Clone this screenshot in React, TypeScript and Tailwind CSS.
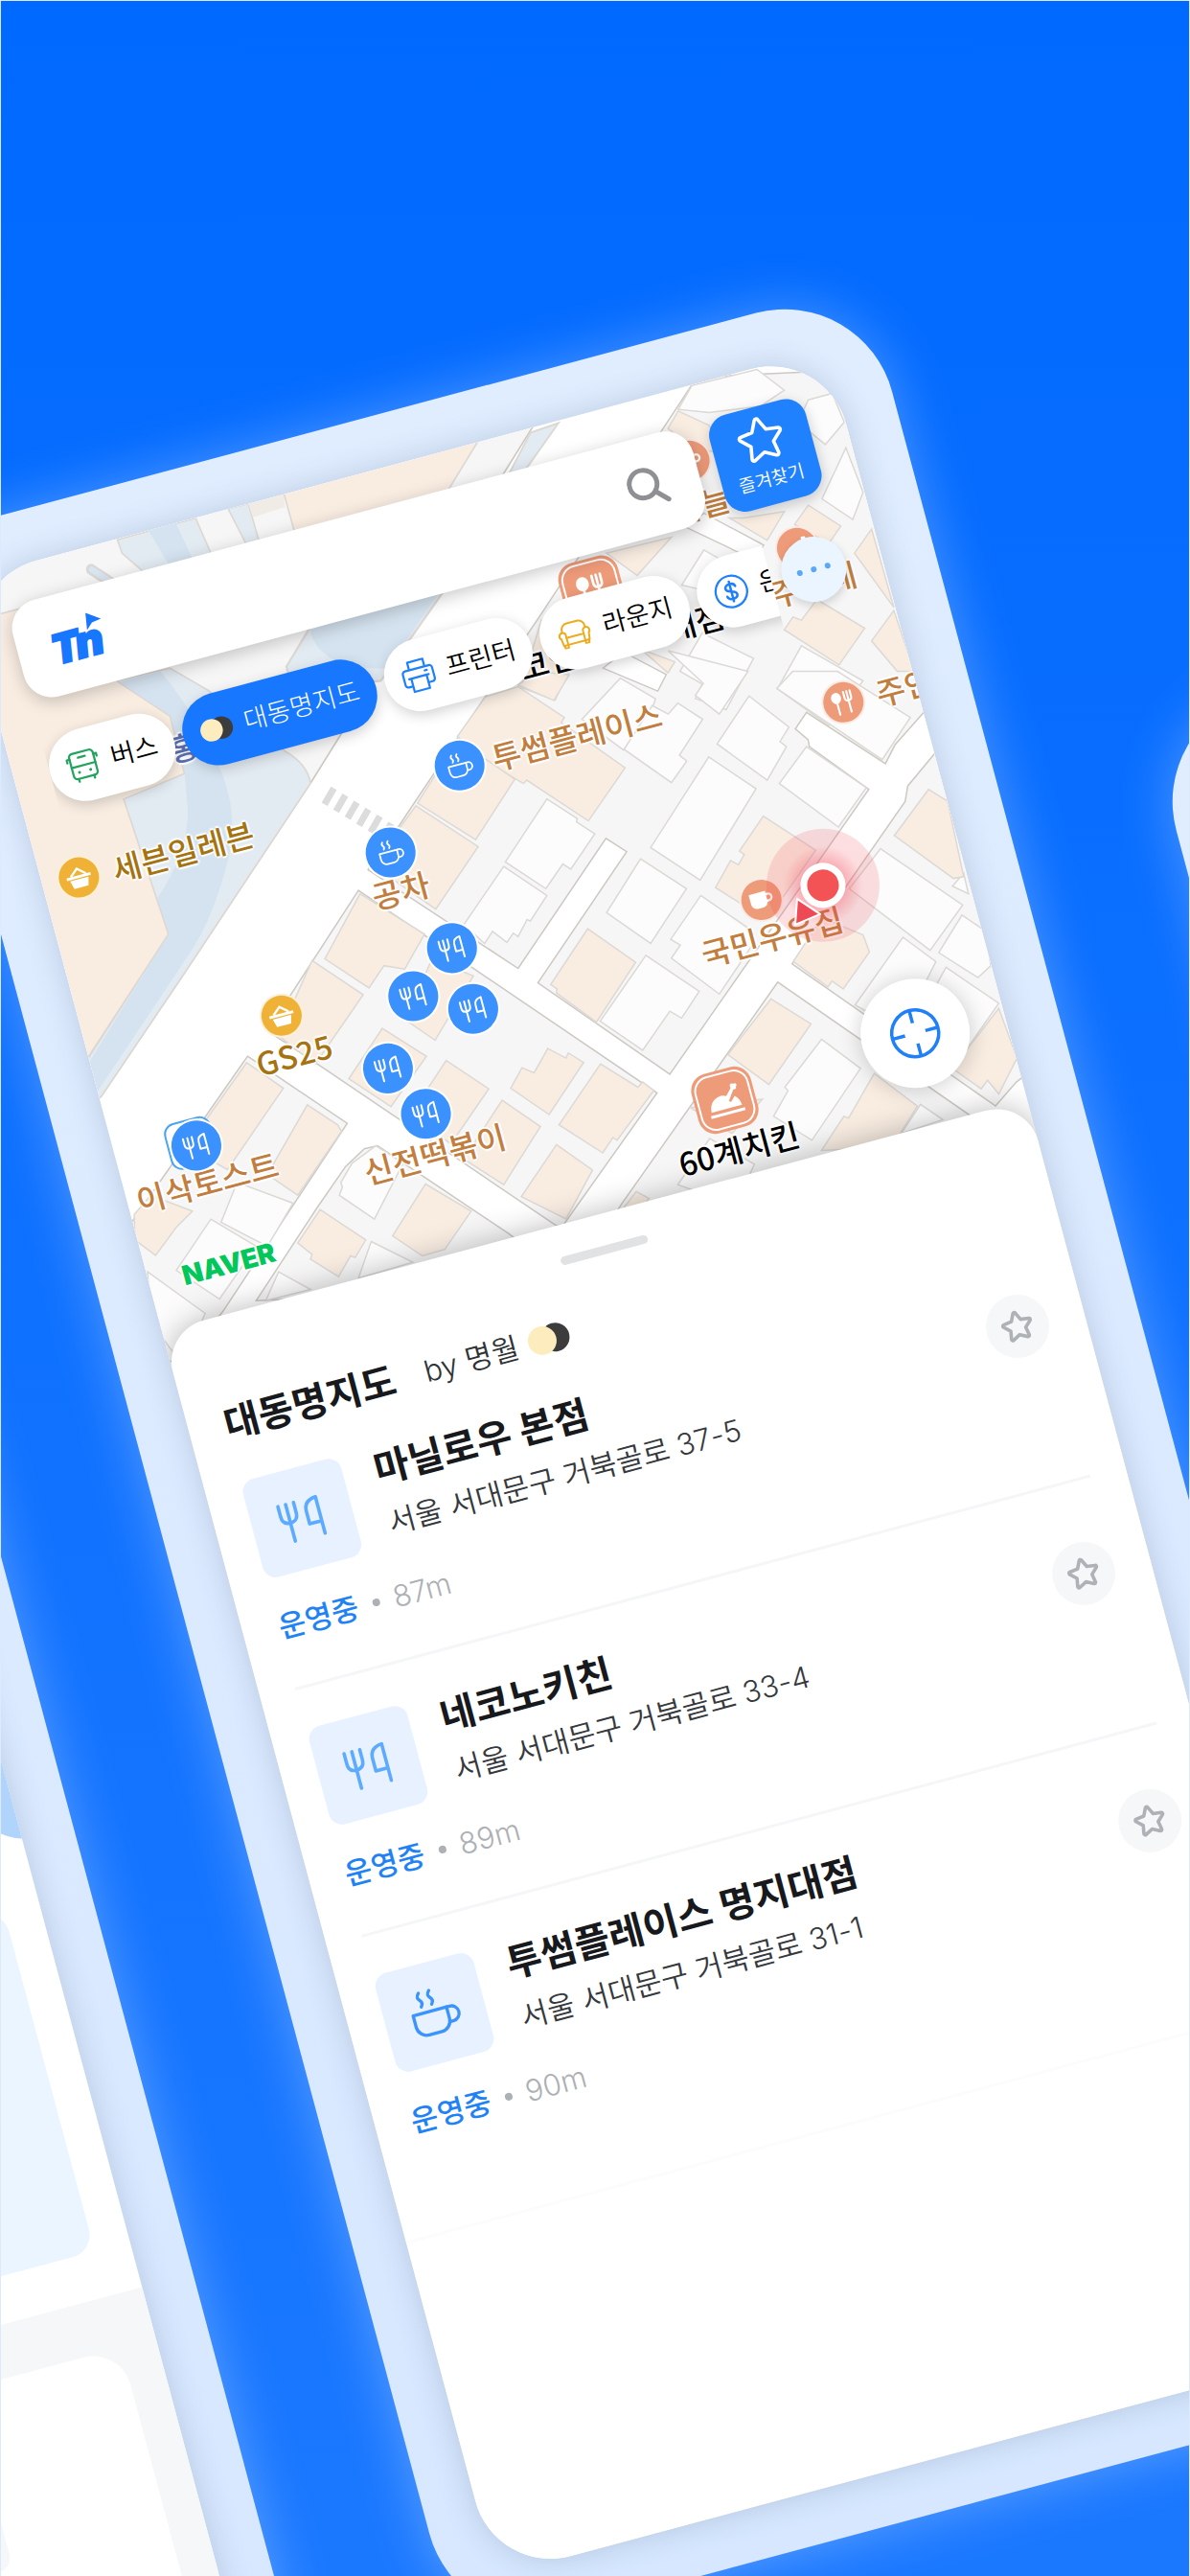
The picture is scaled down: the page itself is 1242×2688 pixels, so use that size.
import type { ReactNode } from "react";

/* ---------- icons ---------- */

type IconProps = { className?: string };

function Utensils({ className }: IconProps) {
  return (
    <svg viewBox="0 0 24 24" className={className} fill="none" stroke="currentColor" strokeWidth="1.6" strokeLinecap="round" strokeLinejoin="round" aria-hidden="true">
      <path d="M2.500 4v5c0 2.400 1.300 3.800 3.700 3.800s3.800-1.400 3.800-3.800V4M6.200 4v17.500" />
      <path d="M20.500 21.500V4c-3.800.3-5.800 2-5.800 5.500v6h5.500" />
    </svg>
  );
}

function Cup({ className }: IconProps) {
  return (
    <svg viewBox="0 0 24 24" className={className} fill="none" stroke="currentColor" strokeWidth="1.500" strokeLinecap="round" strokeLinejoin="round" aria-hidden="true">
      <path d="M2 11h16v5.500a5 5 0 0 1-5 5H7a5 5 0 0 1-5-5z" />
      <path d="M18 11h1.500a3.200 3.200 0 0 1 0 7H18" />
      <path d="M7 1.500c-1.400 1.500-1.300 2.300-.2 3.400 1 1 .9 1.900-.1 3.100M12 1.500c-1.400 1.500-1.300 2.300-.2 3.400 1 1 .9 1.900-.1 3.100" />
    </svg>
  );
}

function Star({ className, width = 2 }: IconProps & { width?: number }) {
  return (
    <svg viewBox="0 0 24 24" className={className} fill="none" stroke="currentColor" strokeWidth={width} strokeLinejoin="round" aria-hidden="true">
      <path d="M11.200 2.600a.9.9 0 0 1 1.600 0l2.500 5.200 5.800.8a.9.9 0 0 1 .5 1.500l-4.200 4 1 5.700a.9.9 0 0 1-1.300.9L12 18l-5.100 2.700a.9.9 0 0 1-1.300-.9l1-5.700-4.200-4a.9.9 0 0 1 .5-1.500l5.800-.8z" />
    </svg>
  );
}

function Bus({ className }: IconProps) {
  return (
    <svg viewBox="0 0 24 24" className={className} fill="none" stroke="currentColor" strokeWidth="1.500" strokeLinecap="round" strokeLinejoin="round" aria-hidden="true">
      <rect x="3.500" y="2.500" width="17" height="18" rx="2.500" />
      <path d="M3.500 12h17M9.500 6h5M3.500 6H1.500v2M20.500 6h2v2M6.500 20.500v2M17.500 20.500v2" />
      <path d="M8 16.200h.01M16 16.200h.01" strokeWidth="2" />
    </svg>
  );
}

function Printer({ className }: IconProps) {
  return (
    <svg viewBox="0 0 24 24" className={className} fill="none" stroke="currentColor" strokeWidth="1.500" strokeLinecap="round" strokeLinejoin="round" aria-hidden="true">
      <path d="M6.500 7V1.500h11V7M6 18.500H3.500a2 2 0 0 1-2-2V9a2 2 0 0 1 2-2h17a2 2 0 0 1 2 2v7.500a2 2 0 0 1-2 2H18" />
      <path d="M5 13h14M6.500 13v9.500h11V13M17 9.800h1.500" />
    </svg>
  );
}

function Sofa({ className }: IconProps) {
  return (
    <svg viewBox="0 0 30 24" className={className} fill="none" stroke="currentColor" strokeWidth="1.600" strokeLinecap="round" strokeLinejoin="round" aria-hidden="true">
      <path d="M5 9V7.500A5.500 5.500 0 0 1 10.500 2h9A5.500 5.500 0 0 1 25 7.500V9" />
      <path d="M7.500 14v-2.300a2.800 2.800 0 0 0-2.800-2.700 2.800 2.800 0 0 0-1.700 5l.8 6h22.400l.8-6a2.800 2.800 0 0 0-1.700-5 2.800 2.800 0 0 0-2.800 2.700V14z" />
      <path d="M7.500 14v5.500M22.500 14v5.500M4.500 20v2.300h3V20M22.500 20v2.300h3V20" />
    </svg>
  );
}

function Dollar({ className }: IconProps) {
  return (
    <svg viewBox="0 0 24 24" className={className} fill="none" stroke="currentColor" strokeWidth="1.500" strokeLinecap="round" aria-hidden="true">
      <circle cx="12" cy="12" r="11" />
      <path d="M15.500 9c-.3-1.500-1.600-2.300-3.500-2.300-2 0-3.500 1-3.500 2.600 0 1.700 1.500 2.200 3.500 2.700s3.500 1 3.500 2.700-1.500 2.600-3.500 2.600c-1.900 0-3.300-.8-3.600-2.400M12 5v14" strokeWidth="1.700" />
    </svg>
  );
}

function Basket({ className }: IconProps) {
  return (
    <svg viewBox="0 0 24 24" className={className} fill="currentColor" aria-hidden="true">
      <path d="M1 10h22v2.500H1zM3.500 13.500h17L18.500 21h-13z" />
      <path d="M5 10l7-6 7 6" fill="none" stroke="currentColor" strokeWidth="2" />
    </svg>
  );
}

function Mug({ className }: IconProps) {
  return (
    <svg viewBox="0 0 24 24" className={className} fill="currentColor" aria-hidden="true">
      <path d="M2 5h15v9a5 5 0 0 1-5 5H7a5 5 0 0 1-5-5z" />
      <path d="M17 8h1.500a3 3 0 0 1 0 6H16" fill="none" stroke="currentColor" strokeWidth="2" />
    </svg>
  );
}

function SpoonFork({ className }: IconProps) {
  return (
    <svg viewBox="0 0 24 24" className={className} fill="none" stroke="currentColor" strokeWidth="1.800" strokeLinecap="round" aria-hidden="true">
      <ellipse cx="6.500" cy="7" rx="4.500" ry="5" fill="currentColor" stroke="none" />
      <path d="M6.500 10v12M14 3v5.500c0 2 1.300 3 3 3s3-1 3-3V3M17 3v19" />
    </svg>
  );
}

function Chicken({ className }: IconProps) {
  return (
    <svg viewBox="0 0 24 24" className={className} fill="currentColor" aria-hidden="true">
      <path d="M1 19.500h22v1.800H1zM2 17.500C2.300 13 4.500 9.800 8.500 9c2-.4 3.600-.2 5 .8l4-4.300c-.8-2 .8-3.300 2-2.100 1.800-.7 2.800 1.200 1.300 2.200.3 1.400-1 1.700-1.900 1.200l-4.600 6.400 1.300.8 3-3c1.800 1.500 2.900 3.500 3.100 6.500z" />
    </svg>
  );
}

function Moons({ small }: { small?: boolean }) {
  return (
    <svg viewBox="0 0 46 32" className={small ? "w-9" : "w-[46px]"} aria-hidden="true">
      <circle cx="30" cy="16" r="15" fill="#3c3c3c" />
      <circle cx="16" cy="16" r="15" fill="#fdedbe" />
    </svg>
  );
}

function Logo() {
  return (
    <svg viewBox="0 0 60 50" className="h-[50px] w-[60px] shrink-0" role="img" aria-label="Th">
      <g fill="#1877ff" stroke="#1877ff" strokeWidth="2" fontFamily="Inter, sans-serif" fontWeight="900" fontStyle="italic">
        <text x="0" y="45" fontSize="43">T</text>
        <text x="25" y="45" fontSize="46">n</text>
      </g>
      <path d="M44 0 58 10 48 11.500 41 18z" fill="#1877ff" />
    </svg>
  );
}

/* ---------- map ---------- */

/* Survey coordinates are level; the device is tilted by 15 degrees. */
const COS = Math.cos(Math.PI / 12);
const SIN = Math.sin(Math.PI / 12);
const project = (x: number, y: number) => ({
  left: Math.round(COS * x - SIN * y + 197),
  top: Math.round(SIN * x + COS * y - 574),
});

const BLOCKS = [
  "1160,-860 667,-160 500,70 228,450 130,580 600,868 875,488 940,527 662,910 1075,1177 1698,345 1512,220 1508,200 1468,168 1503,120 1750,270 1780,215 1865,125 2100,-150 2100,-900",
  "1900,245 1820,335 1812,380 1458,855 2095,1270 2160,1200 2300,1100 2300,-200",
  "1413,908 925,1555 880,1620 2200,1620 2050,1320",
  "100,640 -185,1050 0,1165 720,1620 740,1620 1035,1232",
];
const WEST_BLOCKS = [
  "503,365 815,575 425,1165 300,1320 50,1320 50,1020 150,870",
  "868,655 910,645 1320,920 1400,980 1200,1100 530,1130 720,840 810,710",
];

const SHOPS = [
  "497,75 600,45 745,135 735,150 935,282 820,437 627,318 617,328 495,262 410,190",
  "410,200 590,315 467,492 285,385",
  "280,393 475,512 342,695 180,590 180,520",
  "600,40 655,0 760,10 712,85",
  "818,752 968,850 845,1025 720,940 722,928 702,915",
  "1368,423 1532,523 1400,700 1300,680 1218,632 1265,553 1290,565 1308,535 1293,525",
  "1885,345 1945,380 1995,600 1963,605 1778,480",
  "1550,720 1680,770 1700,820 1618,928 1583,905 1570,922 1462,848",
  "2105,985 2162,1130 2105,1235 2070,1195 2050,1220 1960,1160",
  "1392,957 1517,1030 1385,1207 1257,1120",
  "1715,1175 1850,1270 1770,1390 1550,1400 1620,1300 1635,1305",
  "1140,1275 1365,1250 1270,1350",
  "970,1520 1010,1540 960,1600 920,1580",
  "105,650 307,768 245,870 180,860 133,925 -5,840",
  "-45,845 115,945 -35,1148 -150,1064",
  "330,840 460,890 340,1078 250,1020",
  "175,1043 313,1125 202,1272 70,1190",
  "375,1137 508,1220 390,1380 260,1300",
  "693,1102 750,1130 757,1115 805,1143 697,1295 577,1218 612,1158 650,1173",
  "858,1147 975,1215 990,1200 1025,1225 910,1370 897,1362 865,1407 728,1325",
  "550,1253 670,1330 555,1500 430,1425",
  "720,1383 833,1457 750,1600 610,1535",
];
const HOUSES = [
  "920,20 1030,80 1020,110 930,230 800,140",
  "1100,93 1178,140 1105,245 1128,262 1080,325 932,228 1020,100 1070,125",
  "690,373 785,430 783,440 840,475 765,578 740,563 687,635 560,557",
  "555,570 690,655 638,730 628,725 600,775 585,765 565,792 520,760 495,795 430,740",
  "1197,250 1345,343 1170,610 1015,515",
  "983,548 1127,635 1015,795 877,705",
  "1000,830 1167,935 1112,1013 1075,993 990,1107 857,1022",
  "1172,655 1320,750 1340,790 1230,943 1080,838 1108,800 1078,783",
  "1323,72 1448,163 1420,205 1440,220 1380,318 1223,212",
  "1503,220 1690,340 1603,455 1418,328",
  "1460,0 1410,50 1740,258 1828,135 1600,0",
  "1070,-60 1180,35 1155,70 1230,125 1320,0",
  "1735,518 1992,683 1890,815 1637,635",
  "1995,590 2010,650 1960,628",
  "1990,712 2065,760 2080,860 2040,895 1917,822",
  "1805,777 1908,848 1800,1050 1655,975",
  "1940,865 2105,970 2000,1110 1860,1000",
  "1550,1075 1672,1160 1520,1370 1400,1300 1445,1225 1435,1215",
  "1860,1265 1930,1310 1800,1350",
  "1200,1365 1340,1440 1280,1560 1100,1500",
];
const WEST_SHOPS = [
  "1060,765 1203,850 1120,970 1050,990 957,927",
  "730,845 873,940 840,995 825,990 788,1055 700,1000 705,985 660,950",
  "500,385 615,465 560,545 440,720 370,680 340,610",
  "690,517 785,580 797,600 660,800 565,735",
  "200,800 330,850 280,900 215,988 150,940 148,860",
];
const WEST_HOUSES = [
  "905,645 990,700 900,875 790,800 800,775 795,760 830,700",
  "890,945 1020,1010 850,1060",
  "470,760 645,825 565,960 420,885",
  "388,875 530,960 415,1125 280,1035",
  "600,1040 700,1095 560,1130",
  "190,1040 370,1170 300,1330 200,1200",
];
const NORTH_SHOPS = [
  "860,385 950,430 1000,520 900,500 830,440",
  "1240,680 1335,745 1300,800 1200,740",
  "1050,720 1170,700 1120,790 1010,720",
  "1425,755 1490,1000 1375,830",
  "1265,975 1405,1065 1330,1180 1170,1070 1195,1030 1220,1040",
  "1490,1010 1550,1200 1500,1200 1425,1105",
  "650,830 840,780 740,900",
  "460,1040 540,1200 500,1290 400,1250",
  "750,1130 850,1170 830,1205",
];
const NORTH_HOUSES = [
  "900,305 1090,255 1170,320 1100,370 950,390 860,380",
  "1240,350 1310,330 1345,420 1290,490 1210,420",
  "1350,500 1400,640 1370,725 1280,660",
  "1220,1120 1400,1230 1300,1370 1150,1255",
  "935,820 1000,860 950,950 870,930",
  "930,1080 1080,1160 1000,1320 910,1285 930,1240 865,1200",
];

function Polys({ shapes, fill, stroke }: { shapes: string[]; fill: string; stroke: string }) {
  return (
    <>
      {shapes.map((points) => (
        <polygon key={points} points={points} fill={fill} stroke={stroke} strokeWidth="1.500" vectorEffect="non-scaling-stroke" />
      ))}
    </>
  );
}

const SHOP = "#f9ede2";
const HOUSE = "#fcfcfc";
const EDGE = "#dcd9d5";
const ROAD_EDGE = "#cdc9c2";
const LAND = "#f6f6f6";

function MapArt() {
  return (
    <svg className="absolute inset-0 size-full" aria-hidden="true">
      <rect width="100%" height="100%" fill="#fff" />
      <g transform="translate(197 -574) rotate(15)">
        <g transform="translate(0 560) scale(.33333)">
          <path d="M-600-400H1700L970 770 565 1380 315 1750-300 2300H-800z" fill={LAND} stroke={ROAD_EDGE} strokeWidth="5" />
          <path d="M360 450 530 410 650 480 890 670Q960 710 970 770L565 1380 315 1750 100 1900 430 1390z" fill="#e3ebf2" stroke={EDGE} strokeWidth="5" />
          <path d="M370 455 500 420Q600 540 640 640 760 820 710 1020 660 1200 600 1290L300 1740 150 1850 440 1380 525 1243 490 1130Q590 980 585 850L575 740 530 560z" fill="#d5e3f0" />
          <path d="M385 820 575 740 585 850Q590 980 490 1130z" fill="#e3ebf2" />
          <path d="M0 240 130 205 370 455 530 560 575 740 385 820 525 1243-100 2200-500 2000-400 200z" fill={SHOP} stroke={EDGE} strokeWidth="5" />
          <path d="M970 280 1400 150 1190 450 1000 470Q900 460 895 405z" fill="#e3ebf2" stroke={EDGE} strokeWidth="7" />
          <path d="M970 290 1390 150 1210 410Q1010 420 970 300z" fill="#d5e3f0" />
          <path d="M1043 786 1014 836M1079 808 1050 858M1115 830 1086 880M1151 852 1122 902M1187 874 1158 924M1223 896 1194 946" stroke="#dcdcdc" strokeWidth="21" />
        </g>
        <g transform="translate(0 300) scale(.33333 .35714)" stroke={EDGE} strokeWidth="5">
          <path d="M365 735 610 672 665 790 460 840 380 775z" fill="#e3ebf2" />
          <path d="M460 705 548 685 605 800 540 830z" fill="#d5e3f0" stroke="none" />
          <path d="M712 645 775 630 815 760 775 760z" fill="#e3ebf2" />
          <path d="M775 630 885 600 890 640 790 670z" fill="#f0ebe5" stroke="none" />
          <path d="M885 595 1506 430 1395 600 925 730z" fill={SHOP} />
          <path d="M283 822 345 860" stroke={EDGE} strokeWidth="32" strokeLinecap="round" />
          <path d="M285 823 350 862" stroke="#d9e5f0" strokeWidth="18" strokeLinecap="round" />
        </g>
        <path d="M553 451 582 441 546 492 530 495z" fill="#e3ebf2" stroke={EDGE} strokeWidth="2" />
        <g transform="translate(340 700) scale(.33333 .35714)">
          <Polys shapes={BLOCKS} fill={LAND} stroke={ROAD_EDGE} />
        </g>
        <g transform="translate(400 300) scale(.35714 .33333)">
          <polygon points="935,705 1110,805 1080,850 885,750" fill="#fff" stroke={ROAD_EDGE} strokeWidth="4" />
          <polygon points="640,1190 700,1140 825,1210 800,1262" fill="#fff" stroke={ROAD_EDGE} strokeWidth="4" />
          <Polys shapes={NORTH_HOUSES} fill={HOUSE} stroke={EDGE} />
          <Polys shapes={NORTH_SHOPS} fill={SHOP} stroke={EDGE} />
        </g>
        <g transform="translate(340 700) scale(.33333 .35714)">
          <Polys shapes={HOUSES} fill={HOUSE} stroke={EDGE} />
          <Polys shapes={SHOPS} fill={SHOP} stroke={EDGE} />
        </g>
        <g transform="translate(90 980) scale(.33333)">
          <Polys shapes={WEST_BLOCKS} fill={LAND} stroke={ROAD_EDGE} />
          <Polys shapes={WEST_HOUSES} fill={HOUSE} stroke={EDGE} />
          <Polys shapes={WEST_SHOPS} fill={SHOP} stroke={EDGE} />
        </g>
      </g>
    </svg>
  );
}

type Tone = "brown" | "gold" | "black" | "indigo";
const TONES: Record<Tone, string> = {
  brown: "text-[#c17e3e]",
  gold: "text-[#a5730f]",
  black: "text-black",
  indigo: "text-[#5b70b4]",
};

const LABELS: { text: string; x: number; y: number; tone: Tone }[] = [
  { text: "투썸플레이스", x: 601, y: 767, tone: "brown" },
  { text: "세븐일레븐", x: 190, y: 887, tone: "gold" },
  { text: "공차", x: 417, y: 928, tone: "brown" },
  { text: "신전떡볶이", x: 453, y: 1203, tone: "brown" },
  { text: "이삭토스트", x: 215, y: 1232, tone: "brown" },
  { text: "GS25", x: 306, y: 1099, tone: "gold" },
  { text: "60계치킨", x: 770, y: 1198, tone: "black" },
  { text: "국민우유집", x: 805, y: 976, tone: "brown" },
  { text: "주안상", x: 958, y: 711, tone: "brown" },
  { text: "주막네", x: 848, y: 608, tone: "brown" },
  { text: "코인점 명지대점", x: 648, y: 668, tone: "black" },
  { text: "하늘", x: 731, y: 526, tone: "brown" },
  { text: "홍", x: 190, y: 778, tone: "indigo" },
];

const PINS: { name: string; x: number; y: number; icon: "cup" | "food" }[] = [
  { name: "투썸플레이스", x: 479, y: 798, icon: "cup" },
  { name: "공차", x: 407, y: 889, icon: "cup" },
  { name: "식당 1", x: 471, y: 989, icon: "food" },
  { name: "식당 2", x: 431, y: 1039, icon: "food" },
  { name: "식당 3", x: 493, y: 1052, icon: "food" },
  { name: "식당 4", x: 404, y: 1114, icon: "food" },
  { name: "신전떡볶이", x: 444, y: 1162, icon: "food" },
  { name: "이삭토스트", x: 204, y: 1195, icon: "food" },
];

const BADGES: { x: number; y: number; look: string; icon: ReactNode }[] = [
  { x: 82, y: 915, look: "size-[46px] rounded-full border-2 bg-[#efb236]", icon: <Basket className="size-7" /> },
  { x: 293, y: 1059, look: "size-[46px] rounded-full border-2 bg-[#efb236]", icon: <Basket className="size-7" /> },
  { x: 879, y: 732, look: "size-[46px] rounded-full border-2 bg-[#ee9b79]", icon: <SpoonFork className="size-7" /> },
  { x: 794, y: 938, look: "size-[46px] rounded-full border-2 bg-[#ee9b79]", icon: <Mug className="size-7" /> },
  { x: 719, y: 480, look: "size-[46px] rounded-full border-2 bg-[#ee9b79]", icon: <Mug className="size-7" /> },
  { x: 831, y: 571, look: "size-[46px] rounded-full border-2 bg-[#ee9b79]", icon: <Chicken className="size-7" /> },
];

const SIGNS: { x: number; y: number; icon: ReactNode }[] = [
  { x: 756, y: 1147, icon: <Chicken className="size-10" /> },
  { x: 617, y: 614, icon: <SpoonFork className="size-9" /> },
];

const CENTER = "absolute -translate-x-1/2 -translate-y-1/2";

function MapMarkers() {
  return (
    <>
      {LABELS.map(({ text, x, y, tone }) => (
        <span
          key={text}
          style={project(x, y)}
          className={`${CENTER} ${TONES[tone]} font-['Noto_Sans_CJK_KR',sans-serif] text-[33px] leading-10 font-medium whitespace-nowrap [text-shadow:-2px_0_1px_#fff,2px_0_1px_#fff,0_-2px_1px_#fff,0_2px_1px_#fff,0_0_4px_#fff]`}
        >
          {text}
        </span>
      ))}
      {BADGES.map(({ x, y, look, icon }) => (
        <span key={`${x}-${y}`} style={project(x, y)} className={`${CENTER} ${look} flex items-center justify-center border-white/80 text-white`}>
          {icon}
        </span>
      ))}
      {SIGNS.map(({ x, y, icon }) => (
        <span key={`${x}-${y}`} style={project(x, y)} className={`${CENTER} size-16 rounded-[18px] bg-[#ee9b79] p-[3px] text-white`}>
          <span className="flex size-full items-center justify-center rounded-2xl border-2 border-white">{icon}</span>
        </span>
      ))}
      <span style={project(198, 1192)} className={`${CENTER} size-[50px] rounded-xl border-2 border-[#4aa5f0] bg-white`} />
      <svg style={project(858, 923)} viewBox="-60 -60 120 120" className={`${CENTER} size-[120px]`} role="img" aria-label="현재 위치">
        <defs>
          <radialGradient id="pulse">
            <stop offset="35%" stopColor="#f04452" stopOpacity=".45" />
            <stop offset="70%" stopColor="#f04452" stopOpacity=".18" />
            <stop offset="100%" stopColor="#f04452" stopOpacity=".17" />
          </radialGradient>
        </defs>
        <circle r="59" fill="url(#pulse)" />
        <g transform="rotate(15)">
          <path d="M-27 14-3 30-29 41z" fill="#ee4a56" stroke="#fff" strokeWidth="2" strokeLinejoin="round" />
        </g>
        <circle r="20" fill="#f35355" stroke="#fff" strokeWidth="7" />
      </svg>
      {PINS.map(({ name, x, y, icon }) => (
        <button
          key={name}
          type="button"
          aria-label={name}
          style={project(x, y)}
          className={`${CENTER} flex size-14 items-center justify-center rounded-full border-2 border-white bg-[#3b92ff] text-white`}
        >
          {icon === "cup" ? <Cup className="size-7" /> : <Utensils className="size-[30px]" />}
        </button>
      ))}
      <span className="absolute bottom-8 left-9 text-[28px] leading-9 font-black text-[#03c75a] [text-shadow:-2px_0_1px_#fff,2px_0_1px_#fff,0_-2px_1px_#fff,0_2px_1px_#fff]">
        NAVER
      </span>
    </>
  );
}

/* ---------- top controls ---------- */

function Chip({ icon, label, active }: { icon: ReactNode; label: string; active?: boolean }) {
  return (
    <button
      type="button"
      className={`flex h-[76px] shrink-0 items-center gap-3 rounded-full px-[18px] text-[27px] whitespace-nowrap shadow-[0_4px_14px_rgba(0,0,0,0.18)] ${
        active ? "bg-[#1877ff] font-light text-white" : "bg-white font-[350] text-black"
      }`}
    >
      {icon}
      {label}
    </button>
  );
}

function TopControls() {
  return (
    <div className="relative flex flex-col px-[38px] pt-[39px]">
      <div className="flex h-[104px] gap-5">
        <label className="flex min-w-0 flex-1 items-center rounded-[30px] bg-white pr-[34px] pl-[35px] shadow-[0_4px_18px_rgba(0,0,0,0.22)]">
          <Logo />
          <input aria-label="검색" className="min-w-0 flex-1 bg-transparent px-5 text-[30px] outline-none" />
          <svg viewBox="0 0 42 42" className="size-[42px] shrink-0" fill="none" stroke="#8e9093" strokeWidth="5" strokeLinecap="round" aria-hidden="true">
            <circle cx="17" cy="17" r="14.500" />
            <path d="M28 28 39 39" />
          </svg>
        </label>
        <button type="button" className="flex size-[104px] shrink-0 flex-col items-center rounded-[22px] bg-[#2081ff] pt-2 text-[19px] leading-6 font-[350] text-white shadow-[0_4px_14px_rgba(0,0,0,0.2)]">
          <Star className="size-[54px]" width={1.600} />
          <span className="mt-1">즐겨찾기</span>
        </button>
      </div>
      <div className="mt-[18px] flex items-center gap-3">
        <div className="flex min-w-0 flex-1 gap-[10px] overflow-hidden py-5">
          <Chip icon={<Bus className="size-9 text-[#22a35e]" />} label="버스" />
          <Chip icon={<Moons small />} label="대동명지도" active />
          <Chip icon={<Printer className="size-9 text-[#1f80fb]" />} label="프린터" />
          <Chip icon={<Sofa className="h-[30px] w-[37px] text-[#eeab1c]" />} label="라운지" />
          <Chip icon={<Dollar className="size-9 text-[#1f80fb]" />} label="은행" />
        </div>
        <button type="button" aria-label="더보기" className="flex size-[68px] shrink-0 items-center justify-center gap-[9px] rounded-full bg-[#ebf5ff] shadow-[0_4px_10px_rgba(0,0,0,0.15)]">
          <span className="size-[6px] rounded-full bg-[#5aa8f8]" />
          <span className="size-[6px] rounded-full bg-[#5aa8f8]" />
          <span className="size-[6px] rounded-full bg-[#5aa8f8]" />
        </button>
      </div>
    </div>
  );
}

/* ---------- place list ---------- */

type Place = { name: string; address: string; distance: string; kind: "food" | "cup" };

const PLACES: Place[] = [
  { name: "마닐로우 본점", address: "서울 서대문구 거북골로 37-5", distance: "87m", kind: "food" },
  { name: "네코노키친", address: "서울 서대문구 거북골로 33-4", distance: "89m", kind: "food" },
  { name: "투썸플레이스 명지대점", address: "서울 서대문구 거북골로 31-1", distance: "90m", kind: "cup" },
];

function PlaceItem({ place }: { place: Place }) {
  return (
    <li className="border-b-[3px] border-[#f4f6f8] pt-[42px] pb-11 last:border-b-0">
      <div className="flex items-center">
        <div className="flex size-[106px] shrink-0 items-center justify-center rounded-[14px] bg-[#e7f1ff]">
          {place.kind === "food" ? <Utensils className="size-[54px] text-[#5cabff]" /> : <Cup className="size-[54px] text-[#3b94fc]" />}
        </div>
        <div className="ml-[33px] flex min-w-0 flex-1 flex-col gap-3">
          <h3 className="text-[40px] leading-[46px] font-bold text-[#17191c]">{place.name}</h3>
          <p className="text-[31px] leading-[44px] font-[350] text-[#36393d]">{place.address}</p>
        </div>
        <button type="button" aria-label={`${place.name} 즐겨찾기`} className="flex size-[66px] shrink-0 items-center justify-center rounded-full bg-[#f5f7f9] text-[#aeb1b5]">
          <Star className="size-9" width={2.400} />
        </button>
      </div>
      <div className="mt-8 flex h-10 items-center gap-[15px] text-[31px] leading-10 text-[#adb0b4]">
        <span className="font-medium text-[#1f83f7]">운영중</span>
        <span className="size-2 rounded-full bg-[#adb0b4]" />
        <span className="font-[350]">{place.distance}</span>
      </div>
    </li>
  );
}

function Sheet() {
  return (
    <section className="relative flex flex-1 flex-col rounded-t-[45px] bg-white px-[38px] pt-[33px] shadow-[0_0_32px_rgba(0,0,0,0.28)]">
      <div className="h-[9px] w-[94px] self-center rounded-full bg-[#e1e2e4]" />
      <header className="mt-[51px] flex h-[38px] items-center">
        <h2 className="text-[40px] leading-[38px] font-bold text-[#17191c]">대동명지도</h2>
        <span className="mr-[10px] ml-8 text-[31px] leading-[38px] font-[350] text-[#303336]">by 명월</span>
        <Moons />
      </header>
      <ul>
        {PLACES.map((place) => (
          <PlaceItem key={place.name} place={place} />
        ))}
      </ul>
      <hr className="-mx-[38px] mt-[54px] border-t-[3px] border-[#fcfcfd]" />
    </section>
  );
}

/* ---------- devices ---------- */

function Phone({ children, className = "" }: { children?: ReactNode; className?: string }) {
  return (
    <div className={`h-[2266px] w-[1045px] shrink-0 rounded-[116px] bg-linear-to-b from-[#e0edff] to-[#d6e7ff] p-[55px] shadow-[0_0_60px_rgba(255,255,255,0.3)] ${className}`}>
      <div className="relative flex size-full flex-col overflow-hidden rounded-[82px] bg-white shadow-[0_0_32px_rgba(50,70,100,0.2)]">{children}</div>
    </div>
  );
}

export default function App() {
  return (
    <main className="relative min-h-screen overflow-hidden border-x border-t border-[#dce9ff] bg-linear-to-b from-[#0069ff] to-[#1a78ff] font-['Inter','Noto_Sans_CJK_KR',sans-serif]">
      <div className="absolute top-[880px] left-[-1281px] flex origin-top-left -rotate-15 items-start gap-[168px]">
        <Phone>
          <div className="relative flex h-[1769px] flex-col justify-end px-[38px] pb-[49px]">
            <span className="absolute right-[-64px] bottom-[483px] size-[102px] rounded-full bg-[#b0d4fb]" />
            <div className="h-[369px] rounded-[24px] bg-[#ebf5ff]" />
          </div>
          <div className="flex-1 bg-[#f5f7f9] px-[38px] pt-[55px]">
            <div className="h-full rounded-t-[40px] bg-white px-[168px] pt-[90px]">
              <div className="h-[104px] rounded-2xl bg-[#f5f7f9]" />
            </div>
          </div>
        </Phone>

        <Phone>
          <div className="relative h-[811px] shrink-0">
            <div className="absolute inset-x-0 top-0 -bottom-12 overflow-hidden">
              <MapArt />
            </div>
            <MapMarkers />
            <TopControls />
            <button type="button" aria-label="내 위치로 이동" className="absolute right-[38px] bottom-10 flex size-[114px] items-center justify-center rounded-full bg-white shadow-[0_2px_24px_rgba(0,0,0,0.2)]">
              <svg viewBox="-28 -28 56 56" className="size-14" fill="none" stroke="#1f80f8" strokeWidth="3.500" aria-hidden="true">
                <circle r="24.500" />
                <path d="M0-24V-11M0 24V11M-24 0H-11M24 0H11" />
              </svg>
            </button>
          </div>
          <Sheet />
        </Phone>

        <Phone className="mt-[519px]" />
      </div>
    </main>
  );
}
